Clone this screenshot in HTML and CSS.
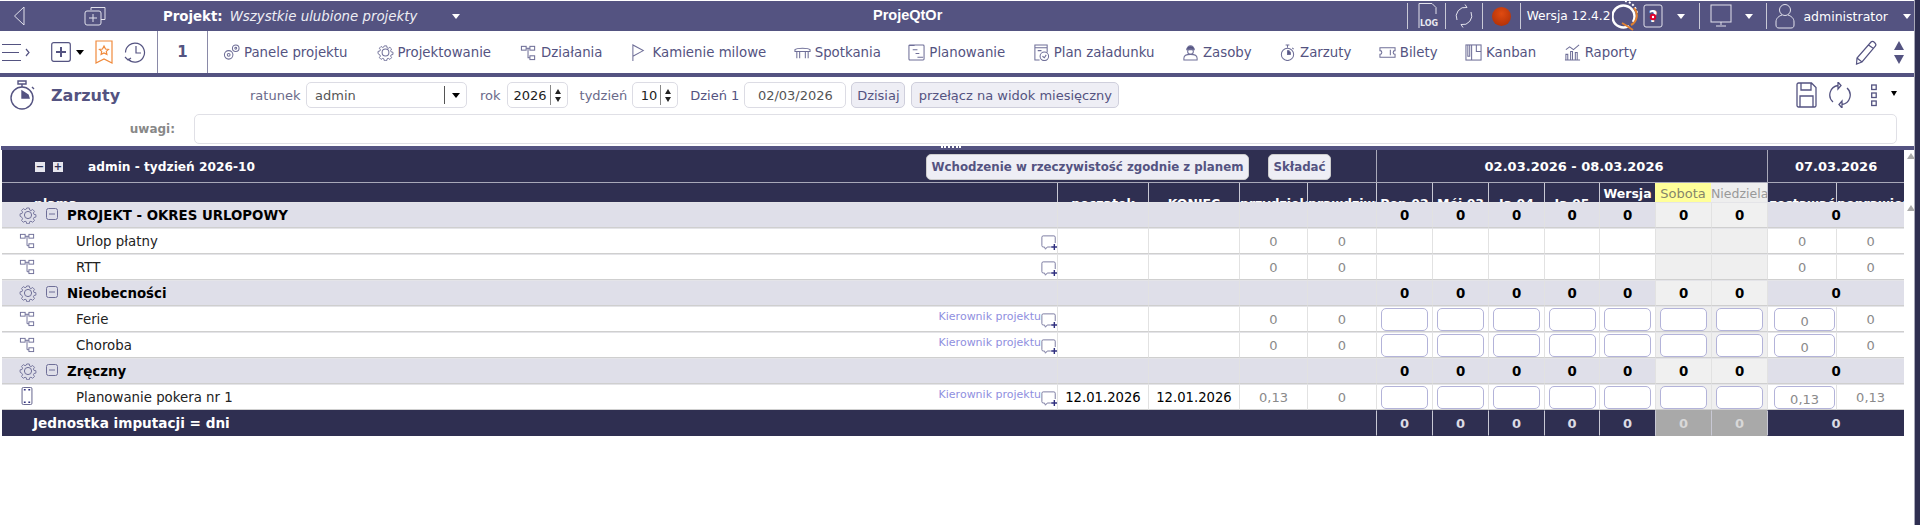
FILE: index.html
```html
<!DOCTYPE html>
<html lang="pl">
<head>
<meta charset="utf-8">
<title>ProjeQtOr</title>
<link rel="stylesheet" href="styles.css">
</head>
<body>
<svg class="defs" aria-hidden="true">
  <symbol id="i-gear" viewBox="0 0 18 18"><path d="M7.6 1.2h2.8l.4 2.2 1.5.7 1.9-1.2 2 2-1.2 1.9.6 1.5 2.2.4v2.6l-2.2.5-.6 1.4 1.2 1.9-2 2-1.9-1.2-1.5.6-.4 2.2H7.6l-.5-2.2-1.4-.6-1.9 1.2-2-2 1.2-1.9-.6-1.4L.2 10.3V7.7l2.2-.4.6-1.5-1.2-1.9 2-2 1.9 1.2 1.4-.7z" transform="translate(.9 .9) scale(.9)"/><circle cx="9" cy="9" r="3.6"/></symbol>
  <symbol id="i-tree" viewBox="0 0 18 18"><rect x="1.500" y="2.500" width="5" height="4"/><rect x="10.500" y="2.500" width="5" height="4"/><rect x="10.500" y="12.500" width="5" height="4"/><path d="M6.500 4.500h4M8.500 4.500v10h2"/></symbol>
  <symbol id="i-comment" viewBox="0 0 18 18"><path d="M2.500 1h12a1.500 1.500 0 0 1 1.500 1.500V9M11 13.500H7l-2 2.500-1-2.500H2.500A1.500 1.500 0 0 1 1 12V2.500A1.500 1.500 0 0 1 2.500 1"/><path class="plus" d="M15 10v7M11.500 13.500h6.500"/></symbol>
  <symbol id="i-minus" viewBox="0 0 12 12"><rect x=".5" y=".5" width="11" height="11" rx="2"/><path d="M3 6h6"/></symbol>
  <symbol id="i-card" viewBox="0 0 12 20"><rect x=".5" y=".5" width="11" height="19" rx="1.500"/><path class="plus" d="M2.500 3h2M7.500 3h2M2.500 17h2M7.500 17h2"/></symbol>
</svg>
<div class="app">
<div class="main">

<header class="topbar">
  <svg class="t-back" width="12" height="22" viewBox="0 0 12 22"><path d="M11 2 1.500 11 11 20z"/></svg>
  <svg class="t-win" width="22" height="20" viewBox="0 0 22 20"><path d="M7 4V1.500h14v12h-4"/><rect x="1" y="5" width="16" height="14" rx="2"/><path d="M9 8v8M5 12h8"/></svg>
  <b class="t-proj">Projekt:</b>
  <i class="t-all">Wszystkie ulubione projekty</i>
  <span class="caret caret-w t-c1"></span>
  <div class="t-title">ProjeQtOr</div>
  <div class="t-right">
    <span class="sep"></span>
    <svg class="t-log" width="22" height="28" viewBox="0 0 22 28"><path d="M2 26V1.500h13l4 4V12"/><text x="3" y="24" class="logtxt">LOG</text></svg>
    <span class="sep"></span>
    <svg class="t-ref" width="20" height="24" viewBox="0 0 20 24"><path d="M3 16A9 9 0 0 1 13 3.500l-2-3M17 8a9 9 0 0 1-10 12.500l2 3"/></svg>
    <span class="sep"></span>
    <span class="ball"></span>
    <span class="sep"></span>
    <span class="t-ver">Wersja 12.4.2</span>
    <svg class="t-q" width="26" height="32" viewBox="0 0 26 32"><path class="q-w" d="M17 26a11 11 0 1 1 4-4"/><path class="q-w2" d="M13 1a14 14 0 0 1 12 12"/><path class="q-o" d="M22 8a11 11 0 0 1-3 17M10 23l5 3 6 4"/></svg>
    <svg class="t-help" width="20" height="24" viewBox="0 0 20 24"><rect x="1" y="1" width="18" height="22" rx="2"/><text x="10" y="18" class="helptxt">?</text><circle class="helpdot" cx="10" cy="13" r="2.200"/></svg>
    <span class="caret caret-w t-c2"></span>
    <span class="sep"></span>
    <svg class="t-mon" width="22" height="24" viewBox="0 0 22 24"><rect x="1" y="1" width="20" height="17"/><path d="M11 18v3M6 22h10"/></svg>
    <span class="caret caret-w t-c3"></span>
    <span class="sep"></span>
    <svg class="t-user" width="20" height="28" viewBox="0 0 20 28"><circle cx="10" cy="8" r="5.500"/><path d="M7 13c-3 1-6 3-6 7v3c0 2 1 3 3 3h12c2 0 3-1 3-3v-3c0-4-3-6-6-7"/></svg>
    <span class="t-admin">administrator</span>
    <span class="caret caret-w t-c4"></span>
  </div>
</header>

<nav class="menubar">
  <svg class="m-burger" width="28" height="20" viewBox="0 0 28 20"><path d="M0 2.500h19M0 10.500h17M0 18.500h19M24 7l3 3.500-3 3.500"/></svg>
  <svg class="m-plus" width="20" height="20" viewBox="0 0 20 20"><rect x=".7" y=".7" width="18.600" height="18.600" rx="2"/><path class="thick" d="M10 5v10M5 10h10"/></svg>
  <span class="caret caret-k m-c"></span>
  <svg class="m-book" width="18" height="24" viewBox="0 0 18 24"><path d="M1 1h16v22l-8-4-8 4z"/><path d="m9 6 1.500 3 3 .4-2.200 2 .6 3L9 13l-2.900 1.400.6-3-2.200-2 3-.4z"/></svg>
  <svg class="m-hist" width="22" height="24" viewBox="0 0 22 24"><path d="M4 19a9.500 9.500 0 1 0-2.500-6.500M1 17l3 3 3-2M12 6v7h5"/></svg>
  <span class="m-num">1</span>
  <a class="mi"><svg viewBox="0 0 18 18"><circle cx="6" cy="11.500" r="4.500"/><circle cx="6" cy="11.500" r="1.500"/><circle cx="13.500" cy="4.500" r="3.500"/><circle cx="13.500" cy="4.500" r="1"/></svg>Panele projektu</a>
  <a class="mi"><svg viewBox="0 0 18 18"><use href="#i-gear"/></svg>Projektowanie</a>
  <a class="mi"><svg viewBox="0 0 18 18"><use href="#i-tree"/></svg>Działania</a>
  <a class="mi mi-flag"><svg viewBox="0 0 18 18"><path d="M2 18V1l11 6-11 6"/></svg>Kamienie milowe</a>
  <a class="mi mi-t"><svg viewBox="0 0 18 18"><path d="M1 6c2-2 14-2 16 0v2H1zM3 8v7M6 8v7M12 8v7M15 8v7"/></svg>Spotkania</a>
  <a class="mi mi-t"><svg viewBox="0 0 18 18"><rect x="1" y="1" width="16" height="16" rx="1"/><path d="M1 1.500h6M5 6h5M8 10h4M10 14h6"/></svg>Planowanie</a>
  <a class="mi mi-t"><svg viewBox="0 0 18 18"><path d="M7 17H2V1h13v8M2 4h13M5 7h4"/><circle cx="12" cy="13" r="4.500"/><path d="M10 13l2 1.500 2-3"/></svg>Plan załadunku</a>
  <a class="mi mi-t"><svg viewBox="0 0 18 18"><path class="fill" d="M5 6a4 4 0 0 1 8 0z"/><circle cx="9" cy="8" r="3"/><path d="M2 17v-2c0-3 3-4 7-4s7 1 7 4v2z"/></svg>Zasoby</a>
  <a class="mi mi-t"><svg viewBox="0 0 18 18"><circle cx="9" cy="11" r="6.500"/><path d="M7 1h4M9 1v3M14 4l1.500 1.500"/><path class="fill" d="M9 7v4h3a3 3 0 0 0-3-4"/></svg>Zarzuty</a>
  <a class="mi mi-t"><svg viewBox="0 0 18 18"><path d="M1 4h16v3a2 2 0 0 0 0 4v3H1v-3a2 2 0 0 0 0-4z"/><path d="M12 6v6"/></svg>Bilety</a>
  <a class="mi mi-t"><svg viewBox="0 0 18 18"><rect x="1" y="1" width="16" height="16"/><path d="M7 1v16M12 1v7h5M5 1v12H3V1"/></svg>Kanban</a>
  <a class="mi mi-t"><svg viewBox="0 0 18 18"><path d="M2 17v-6h2v6M7 17V8h2v9M12 17V9h2v8M1 17h16M2 6l4-3 4 3 6-5"/></svg>Raporty</a>
  <svg class="m-pencil" width="24" height="26" viewBox="0 0 24 26"><path d="M7 23 1.500 25l.5-6L16 3c2-2 6 2 4.500 4zM13.500 6l5 3.500M2 19l5 4"/></svg>
  <div class="m-updown"><span class="tri-up"></span><span class="tri-down"></span></div>
</nav>

<section class="filters">
  <div class="f-row">
    <svg class="f-watch" width="26" height="30" viewBox="0 0 26 30"><circle cx="13" cy="18" r="11"/><path d="M9 1h8v3H9zM13 4v3M23 7l2 2"/><path class="fill" d="M13 18V11l6 4 1 3z"/></svg>
    <h1 class="f-title">Zarzuty</h1>
    <label class="f-lbl f-l1">ratunek</label>
    <div class="inp f-sel"><span class="val">admin</span><span class="sel-btn"><span class="caret caret-k"></span></span></div>
    <label class="f-lbl f-l2">rok</label>
    <div class="inp f-num f-year"><span class="num">2026</span><span class="spin"><span class="tri-up-s"></span><span class="tri-down-s"></span></span></div>
    <label class="f-lbl f-l3">tydzień</label>
    <div class="inp f-num f-week"><span class="num">10</span><span class="spin"><span class="tri-up-s"></span><span class="tri-down-s"></span></span></div>
    <label class="f-lbl f-l4">Dzień 1</label>
    <div class="inp f-date"><span class="val">02/03/2026</span></div>
    <button class="f-btn f-today">Dzisiaj</button>
    <button class="f-btn f-month">przełącz na widok miesięczny</button>
    <div class="f-tools">
      <svg width="21" height="26" viewBox="0 0 21 26"><path d="M1 2.500A1.500 1.500 0 0 1 2.500 1h13L20 5.500v18a1.500 1.500 0 0 1-1.500 1.500h-16A1.500 1.500 0 0 1 1 23.500zM5 1v7h10V1M4 25V14h13v11"/></svg>
      <svg class="f-reload" width="22" height="26" viewBox="0 0 22 26"><path d="M4 20A9.500 9.500 0 0 1 9 3.500M9 0v7l3-3.500zM18 6a9.500 9.500 0 0 1-5 16.500M13 26v-7l-3 3.500z"/></svg>
      <svg class="f-kebab" width="6" height="26" viewBox="0 0 6 26"><rect x=".7" y="3" width="4.500" height="4.500"/><rect x=".7" y="11" width="4.500" height="4.500"/><rect x=".7" y="19" width="4.500" height="4.500"/></svg>
      <span class="caret caret-k f-c"></span>
    </div>
  </div>
  <div class="f-row2">
    <label class="f-notes-l">uwagi:</label>
    <div class="f-notes"></div>
  </div>
</section>

<div class="splitter"><span class="handle"></span></div>

<div class="grid-wrap">
<table class="grid">
  <colgroup>
    <col class="c-name"><col class="c-start"><col class="c-end"><col class="c-a1"><col class="c-a2">
    <col class="c-d1"><col class="c-d1"><col class="c-d1"><col class="c-d2"><col class="c-d1"><col class="c-d1"><col class="c-d1">
    <col class="c-l"><col class="c-r">
  </colgroup>
  <thead>
    <tr class="h1">
      <th colspan="5" class="h1-main">
        <div class="h1-in">
          <span class="sq">−</span><span class="sq sq2">+</span>
          <span class="h1-title">admin - tydzień 2026-10</span>
          <button class="h-btn h-b1">Wchodzenie w rzeczywistość zgodnie z planem</button>
          <button class="h-btn h-b2">Składać</button>
        </div>
      </th>
      <th colspan="7" class="h1-cell h1-week">02.03.2026 - 08.03.2026</th>
      <th colspan="2" class="h1-cell">07.03.2026</th>
    </tr>
    <tr class="h2">
      <th class="h2-first"><div class="clip">plama</div></th>
      <th><div class="clip">początek</div></th>
      <th><div class="clip">KONIEC</div></th>
      <th><div class="clip">przydzielony</div></th>
      <th><div class="clip">prawdziwy</div></th>
      <th><div class="clip">Pon 02</div></th>
      <th><div class="clip">Mói 03</div></th>
      <th><div class="clip">Ja 04</div></th>
      <th><div class="clip">Ja 05</div></th>
      <th><div class="top">Wersja</div></th>
      <th class="h-sat"><div class="top">Sobota</div></th>
      <th class="h-sun"><div class="top">Niedziela</div></th>
      <th><div class="clip">zostawać</div></th>
      <th><div class="clip">poprawiony</div></th>
    </tr>
  </thead>
  <tbody>
    <tr class="grp"><td><div class="n"><svg class="ic-g"><use href="#i-gear"/></svg><svg class="ic-m"><use href="#i-minus"/></svg><span>PROJEKT - OKRES URLOPOWY</span></div></td><td></td><td></td><td></td><td></td><td>0</td><td>0</td><td>0</td><td>0</td><td>0</td><td class="we">0</td><td class="we">0</td><td colspan="2">0</td></tr>
    <tr class="row"><td><div class="n"><svg class="ic-t"><use href="#i-tree"/></svg><span class="task">Urlop płatny</span><svg class="ic-c"><use href="#i-comment"/></svg></div></td><td></td><td></td><td class="g">0</td><td class="g">0</td><td></td><td></td><td></td><td></td><td></td><td class="we"></td><td class="we"></td><td class="g low">0</td><td class="g">0</td></tr>
    <tr class="row"><td><div class="n"><svg class="ic-t"><use href="#i-tree"/></svg><span class="task">RTT</span><svg class="ic-c"><use href="#i-comment"/></svg></div></td><td></td><td></td><td class="g">0</td><td class="g">0</td><td></td><td></td><td></td><td></td><td></td><td class="we"></td><td class="we"></td><td class="g low">0</td><td class="g">0</td></tr>
    <tr class="grp"><td><div class="n"><svg class="ic-g"><use href="#i-gear"/></svg><svg class="ic-m"><use href="#i-minus"/></svg><span>Nieobecności</span></div></td><td></td><td></td><td></td><td></td><td>0</td><td>0</td><td>0</td><td>0</td><td>0</td><td class="we">0</td><td class="we">0</td><td colspan="2">0</td></tr>
    <tr class="row"><td><div class="n"><svg class="ic-t"><use href="#i-tree"/></svg><span class="task">Ferie</span><span class="pm">Kierownik projektu</span><svg class="ic-c ic-c2"><use href="#i-comment"/></svg></div></td><td></td><td></td><td class="g">0</td><td class="g">0</td><td><div class="cell"></div></td><td><div class="cell"></div></td><td><div class="cell"></div></td><td><div class="cell"></div></td><td><div class="cell"></div></td><td class="we"><div class="cell"></div></td><td class="we"><div class="cell"></div></td><td class="g"><div class="cell cell-l">0</div></td><td class="g">0</td></tr>
    <tr class="row"><td><div class="n"><svg class="ic-t"><use href="#i-tree"/></svg><span class="task">Choroba</span><span class="pm">Kierownik projektu</span><svg class="ic-c ic-c2"><use href="#i-comment"/></svg></div></td><td></td><td></td><td class="g">0</td><td class="g">0</td><td><div class="cell"></div></td><td><div class="cell"></div></td><td><div class="cell"></div></td><td><div class="cell"></div></td><td><div class="cell"></div></td><td class="we"><div class="cell"></div></td><td class="we"><div class="cell"></div></td><td class="g"><div class="cell cell-l">0</div></td><td class="g">0</td></tr>
    <tr class="grp"><td><div class="n"><svg class="ic-g"><use href="#i-gear"/></svg><svg class="ic-m"><use href="#i-minus"/></svg><span>Zręczny</span></div></td><td></td><td></td><td></td><td></td><td>0</td><td>0</td><td>0</td><td>0</td><td>0</td><td class="we">0</td><td class="we">0</td><td colspan="2">0</td></tr>
    <tr class="row"><td><div class="n"><svg class="ic-t ic-card"><use href="#i-card"/></svg><span class="task">Planowanie pokera nr 1</span><span class="pm">Kierownik projektu</span><svg class="ic-c ic-c2"><use href="#i-comment"/></svg></div></td><td class="date">12.01.2026</td><td class="date">12.01.2026</td><td class="g">0,13</td><td class="g">0</td><td><div class="cell"></div></td><td><div class="cell"></div></td><td><div class="cell"></div></td><td><div class="cell"></div></td><td><div class="cell"></div></td><td class="we"><div class="cell"></div></td><td class="we"><div class="cell"></div></td><td class="g"><div class="cell cell-l">0,13</div></td><td class="g">0,13</td></tr>
    <tr class="tot"><td colspan="5" class="tot-l">Jednostka imputacji = dni</td><td>0</td><td>0</td><td>0</td><td>0</td><td>0</td><td class="we">0</td><td class="we">0</td><td colspan="2">0</td></tr>
  </tbody>
</table>
<div class="gutter"><span class="sb-up"></span><span class="sb-up sb-up2"></span></div>
</div>

</div>
<div class="rail"></div>
</div>
</body>
</html>
```

FILE: styles.css
```css
* { box-sizing: border-box; }
html, body { margin: 0; height: 100%; background: #fff; overflow: hidden; }
body { font-family: "DejaVu Sans", Verdana, sans-serif; font-size: 13.330px; color: #000; }
.defs { display: none; }
svg { fill: none; stroke: #545381; stroke-width: 1; flex: none; display: block; }
.app { display: flex; height: 525px; }
.main { flex: 1; min-width: 0; }
.rail { width: 6px; background: #2f2f51; border-left: 1px solid #a8a8b8; }

.caret { display: block; flex: none; width: 0; height: 0; border-left: 4px solid transparent; border-right: 4px solid transparent; border-top: 5px solid #000; }
.caret-w { border-top-color: #fff; }

/* top bar */
.topbar { height: 30px; margin-top: 1px; background: #545381; color: #fff; display: flex; align-items: center; position: relative; }
.topbar svg { stroke: #e2e2ec; }
.t-back { margin-left: 13px; }
.t-win { margin-left: 59px; }
.t-proj { margin-left: 57px; font-size: 13.330px; }
.t-all { margin-left: 7px; font-size: 13.330px; color: #eeeef4; white-space: nowrap; }
.t-c1 { margin-left: 35px; }
.t-title { position: absolute; left: 873px; top: 6px; font: bold 14.500px "Liberation Sans", Arial, sans-serif; }
.t-right { margin-left: auto; display: flex; align-items: center; height: 100%; padding-right: 3px; }
.sep { width: 1px; height: 26px; background: #c9c9d6; flex: none; }
.t-log { margin: 0 6px 0 9px; }
.logtxt { font: bold 8px "DejaVu Sans", sans-serif; fill: #e8e8f0; stroke: none; }
.t-ref { margin: 0 8px 0 8px; }
.ball { width: 19px; height: 19px; border-radius: 50%; margin: 0 9px; background: radial-gradient(circle at 50% 35%, #e04a10, #a82c06); flex: none; }
.t-ver { margin-left: 6px; font-size: 12.200px; white-space: nowrap; }
.t-q { margin-left: 2px; }
.topbar .q-w { stroke: #fff; stroke-width: 2.500; }
.topbar .q-w2 { stroke: #fff; stroke-width: 2; stroke-dasharray: 2 2; }
.topbar .q-o { stroke: #e08030; stroke-width: 2; }
.t-help { margin-left: 5px; }
.helptxt { font: bold 15px "DejaVu Sans", sans-serif; fill: #fff; stroke: none; text-anchor: middle; }
.topbar .helpdot { fill: #fff; stroke: #e0002a; stroke-width: 2; }
.t-c2 { margin: 0 14px 0 14px; }
.t-mon { margin-left: 10px; }
.t-c3 { margin: 0 13px 0 13px; }
.t-user { margin-left: 8px; }
.t-admin { margin-left: 8px; font-size: 12.500px; }
.t-c4 { margin-left: 15px; }

/* menu */
.menubar { height: 46px; border-bottom: 4px solid #545381; display: flex; align-items: center; color: #545381; font-size: 13.330px; }
.menubar svg { stroke: #545381; stroke-width: 1.200; }
.m-burger { margin-left: 2px; }
.m-plus { margin-left: 21px; }
.menubar .thick { stroke-width: 2; }
.m-c { margin-left: 5px; }
.menubar .m-book { margin-left: 11px; stroke: #f08a3c; }
.m-hist { margin-left: 11px; }
.m-num { width: 51px; margin-left: 11px; height: 42px; line-height: 42px; text-align: center; font-weight: bold; font-size: 15px; border-left: 1px solid #8a8aa8; border-right: 1px solid #8a8aa8; flex: none; }
.mi { display: flex; align-items: center; gap: 4px; margin-left: 29px; white-space: nowrap; }
.mi:first-of-type { margin-left: 15px; }
.menubar .mi svg { width: 17px; height: 17px; stroke: #6f6f98; stroke-width: 1.100; }
.menubar .mi .fill, .f-watch .fill { fill: #545381; }
.mi-flag { margin-left: 29px; }
.mi-t { margin-left: 27.400px; }
.m-pencil { margin-left: auto; }
.m-updown { margin: 0 10px 0 15px; display: flex; flex-direction: column; gap: 5px; }
.tri-up, .tri-down { display: block; width: 0; height: 0; border-left: 5.500px solid transparent; border-right: 5.500px solid transparent; }
.tri-up { border-bottom: 9px solid #545381; }
.tri-down { border-top: 9px solid #545381; }

/* filters */
.filters { height: 69px; padding-top: 5px; }
.f-row { display: flex; align-items: center; height: 26px; color: #6a6a8a; font-size: 13px; }
.f-watch { margin-left: 9px; stroke-width: 1.400; }
.f-title { margin: 0 0 0 16px; font-size: 16px; font-weight: bold; color: #545381; width: 199px; flex: none; }
.f-lbl { white-space: nowrap; flex: none; }
.inp { height: 26px; border: 1px solid #dcdce4; border-radius: 5px; display: flex; align-items: center; background: #fff; flex: none; color: #555; }
.f-l1 { width: 51px; }
.f-sel { width: 161px; margin-left: 5px; justify-content: space-between; padding-left: 8px; }
.val { font-size: 13px; }
.sel-btn { width: 22px; height: 18px; border-left: 1px solid #555; display: flex; align-items: center; justify-content: center; }
.f-l2 { margin-left: 13px; }
.f-year { width: 61px; margin-left: 6px; }
.f-week { width: 46px; margin-left: 5px; }
.num { flex: 1; text-align: right; color: #222; font-size: 13px; }
.spin { width: 14px; height: 20px; margin: 0 3px 0 3px; border-left: 1px solid #888; display: flex; flex-direction: column; align-items: center; justify-content: center; gap: 3px; padding-left: 1px; }
.tri-up-s, .tri-down-s { display: block; width: 0; height: 0; border-left: 3.500px solid transparent; border-right: 3.500px solid transparent; }
.tri-up-s { border-bottom: 5px solid #222; }
.tri-down-s { border-top: 5px solid #222; }
.f-l3 { margin-left: 12px; }
.f-l4 { margin-left: 12px; color: #545381; }
.f-date { width: 102px; margin-left: 5px; justify-content: center; }
.f-btn { height: 26px; margin-left: 6px; padding: 0; border: 1px solid #cfcfdc; border-radius: 5px; background: #eeeef5; color: #545381; font: 13px "DejaVu Sans", sans-serif; flex: none; }
.f-today { width: 54px; margin-left: 5px; }
.f-month { width: 208px; }
.f-tools { margin-left: auto; display: flex; align-items: center; padding-right: 17px; }
.f-tools svg { stroke-width: 1.300; }
.f-reload { margin-left: 12px; }
.f-kebab { margin-left: 20px; }
.f-c { margin-left: 14px; margin-bottom: 4px; border-left-width: 3.500px; border-right-width: 3.500px; }
.f-row2 { display: flex; margin-top: 6px; height: 30px; }
.f-notes-l { width: 175px; text-align: right; line-height: 30px; color: #888; font-size: 12px; font-weight: bold; }
.f-notes { width: 1703px; margin-left: 19px; border: 1px solid #e0e0e6; border-radius: 5px; }

.splitter { height: 4px; background: #545381; margin-left: 1px; display: flex; justify-content: center; }
.handle { width: 20px; height: 2px; margin-left: -14px; border-top: 2px dotted #fff; }

/* table */
.grid-wrap { display: flex; padding-left: 2px; }
.gutter { width: 10px; flex: none; position: relative; }
.sb-up { position: absolute; left: 3px; top: 3px; width: 0; height: 0; border-left: 4px solid transparent; border-right: 4px solid transparent; border-bottom: 6px solid #aaa; }
.sb-up2 { top: 55px; }
.grid { width: 1902px; table-layout: fixed; border-collapse: separate; border-spacing: 0; flex: none; }
.c-name { width: 1055px; } .c-start { width: 91px; } .c-end { width: 91px; } .c-a1 { width: 68px; } .c-a2 { width: 69px; }
.c-d1 { width: 56px; } .c-d2 { width: 55px; } .c-l { width: 69px; } .c-r { width: 68px; }
.grid th, .grid td { padding: 0; overflow: hidden; }
.h1 th { height: 33px; background: #2f2f51; color: #fff; font-size: 13px; border-bottom: 1px solid #a8a8b8; }
.h1-cell { border-left: 1px solid #a8a8b8; }
.grid .h1-week { padding-left: 4px; }
.h1-in { display: flex; align-items: center; height: 32px; padding-top: 2px; }
.sq { width: 10px; height: 10px; margin-left: 33px; background: #e6e6ee; color: #2f2f51; font: bold 10px/10px "DejaVu Sans", sans-serif; text-align: center; flex: none; }
.sq2 { margin-left: 8px; }
.h1-title { margin-left: 25px; font-size: 12.200px; white-space: nowrap; width: 838px; text-align: left; flex: none; }
.h-btn { height: 26px; padding: 0; border: 1px solid #ccc; border-radius: 5px; background: #eeeef5; color: #545381; font: bold 11.800px "DejaVu Sans", sans-serif; flex: none; white-space: nowrap; }
.h-b1 { width: 323px; }
.h-b2 { width: 63px; margin-left: 19px; }
.h2 th { height: 19px; background: #2f2f51; color: #fff; font-size: 12.500px; border-left: 1px solid #c8c8d4; }
.h2 th.h2-first { border-left: 0; text-align: left; padding-left: 32px; }
.clip { height: 19px; overflow: hidden; padding-top: 14px; line-height: 14px; white-space: nowrap; }
.top { height: 19px; overflow: hidden; padding-top: 3px; line-height: 15px; white-space: nowrap; }
.h2 th.h-sat { background: #ffff99; color: #85856a; border-left: 0; font-weight: normal; font-size: 13px; }
.h2 th.h-sun { background: #eeeeee; color: #999; border-left: 0; font-weight: normal; font-size: 12.500px; }

.grid tbody td { height: 26px; border-left: 1px solid #e2e2e2; border-top: 1px solid #e4e4e8; border-bottom: 1px solid #cfcfcf; text-align: center; white-space: nowrap; }
.grid tbody td:first-child { border-left: 0; }
.grp td { background: #dfdfe9; font-weight: bold; font-size: 13.330px; }
.grp td.we { background: #f0f0f0; }
.row td { background: #fff; }
.row td.we { background: #efefef; }
.g { color: #8a8a8a; font-size: 13px; }
.low { padding-top: 2px; }
.date { color: #000; font-size: 13.200px; }
.n { display: flex; align-items: center; height: 24px; text-align: left; position: relative; }
.ic-g { width: 18px; height: 18px; margin-left: 17px; stroke: #6f6f98; }
.ic-m { width: 12px; height: 12px; margin-left: 9px; margin-bottom: 3px; stroke: #6f6f98; }
.n span { margin-left: 9px; }
.ic-t { width: 17px; height: 17px; margin-left: 17px; stroke: #6f6f98; margin-bottom: 2px; }
.n .task { margin-left: 40px; font-size: 13.330px; color: #222; }
.grid .ic-card { width: 12px; height: 18px; margin-left: 19px; margin-right: 3px; stroke: #545381; }
.pm { margin-left: auto !important; font-size: 11px; color: #8f8fe0; margin-bottom: 5px; }
.ic-c { width: 16px; height: 18px; margin-left: auto; margin-right: 0; margin-top: 4px; stroke: #6f6f98; }
.ic-c2 { margin-left: 0; }
.plus { stroke: #2f2f7f; stroke-width: 1.600; }
.cell { width: 47px; height: 23px; margin: 0 auto; border: 1px solid #b3b3d9; border-radius: 5px; background: #fff; }
.cell-l { width: 61px; line-height: 23px; margin-left: 6px; padding-top: 1px; }
.tot td, .grid tbody .tot td { background: #2f2f51; color: #dcdce4; font-weight: bold; font-size: 13px; height: 26px; border-top-color: #2f2f51; border-bottom: 1px solid #2f2f51; border-left-color: #c8c8d4; }
.grid tbody .tot td.we { background: #a9a9a9; color: #d8d8d8; border-top-color: #a9a9a9; border-bottom-color: #a9a9a9; }
.grid tbody .tot td.tot-l { text-align: left; padding-left: 31px; color: #fff; font-size: 13.600px; }
```
